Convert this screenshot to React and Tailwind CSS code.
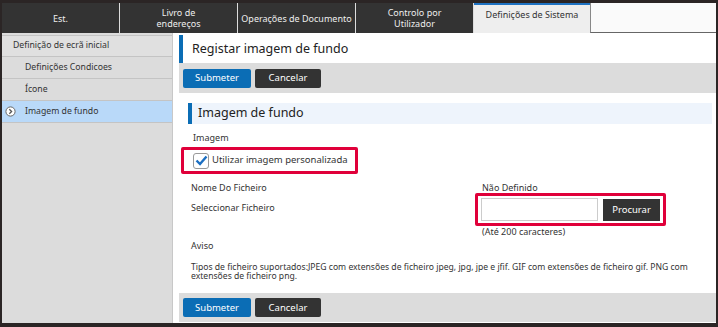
import React from 'react';

const tabs = [
  { label: 'Est.' },
  { label: 'Livro de\nendereços' },
  { label: 'Operações de Documento' },
  { label: 'Controlo por\nUtilizador' },
];

const Buttons = () => (
  <div className="flex gap-[4px]">
    <button className="w-[68px] h-[19px] rounded-[2px] bg-[#0b6db5] text-white text-[9.5px] leading-none">Submeter</button>
    <button className="w-[66px] h-[19px] rounded-[2px] bg-[#333] text-white text-[9.5px] leading-none">Cancelar</button>
  </div>
);

export default function App() {
  return (
    <div
      className="w-[718px] h-[327px] bg-[#2b2525] p-[2px] pt-[3px] pb-[4px] flex flex-col text-[#333]"
      style={{ fontFamily: '"Noto Sans", "Open Sans", sans-serif' }}
    >
      {/* Tab bar */}
      <div className="flex h-[30px] shrink-0">
        {tabs.map((t, i) => (
          <div key={i} className="w-[118px] flex items-stretch">
            <div className="flex-1 bg-[#333] flex items-center justify-center text-center text-[9px] leading-[11px] text-[#eee] whitespace-pre-line">
              {t.label}
            </div>
            <div className="w-[1px] bg-[#ddd]" />
          </div>
        ))}
        <div className="w-[116px] bg-[#eee] border-t-2 border-[#1f73c3] flex justify-center pt-[4px] text-[9px] leading-[11px]">
          Definições de Sistema
        </div>
        <div className="flex-1 bg-[#fafafa] border-b border-[#666] border-l border-l-[#888]" />
      </div>

      <div className="flex flex-1 bg-white min-h-0">
        {/* Sidebar */}
        <div className="w-[171px] bg-[#dcdcdc] border-r border-[#c8c8c8] pt-[2px] text-[8.7px]">
          <div className="h-[22px] flex items-center pl-[11px] border-y border-[#c4c4c4] bg-[#e0e0e0]">Definição de ecrã inicial</div>
          <div className="h-[22px] flex items-center pl-[23px] border-b border-[#c4c4c4]">Definições Condicoes</div>
          <div className="h-[22px] flex items-center pl-[23px] border-b border-[#c4c4c4]">Ícone</div>
          <div className="h-[22px] flex items-center pl-[3px] border-b border-[#c4c4c4] bg-[#b9d9f9]">
            <svg width="11" height="11" viewBox="0 0 11 11" className="mr-[9px]">
              <circle cx="5.5" cy="5.5" r="4.6" fill="#fff" stroke="#666" strokeWidth="1" />
              <path d="M4.3 3.2 L6.6 5.5 L4.3 7.8" fill="none" stroke="#555" strokeWidth="1.3" />
            </svg>
            Imagem de fundo
          </div>
        </div>

        {/* Main */}
        <div className="flex-1 flex flex-col pl-[6px] pt-[2px]">
          <div className="h-[28px] border-l-[4px] border-[#0b6db5] flex items-center pl-[9px] text-[12.5px] text-[#222]">
            Registar imagem de fundo
          </div>
          <div className="h-[30px] bg-[#dcdcdc] flex items-center pl-[4px]">
            <Buttons />
          </div>

          <div className="flex-1 flex flex-col pl-[9px] pr-[4px] pt-[10px]">
            <div className="h-[21px] bg-[#eef4fc] border-l-[4px] border-[#0b6db5] flex items-center pl-[6px] text-[12.5px] text-[#222]">
              Imagem de fundo
            </div>
            <div className="pl-[5px] text-[9px] mt-[8px] leading-[12px]">Imagem</div>
            <div className="mt-[3px] -ml-[7px] w-[177px] h-[27px] border-[3px] border-[#e0003a] rounded-[2px] flex items-center pl-[9px]">
              <div className="w-[16px] h-[16px] rounded-[3px] border border-[#999] bg-white flex items-center justify-center">
                <svg width="13" height="11" viewBox="0 0 13 11">
                  <path d="M1.5 5.5 L5 9 L11.5 1.5" fill="none" stroke="#1c6fc2" strokeWidth="2.4" />
                </svg>
              </div>
              <span className="ml-[3px] text-[9.5px] whitespace-nowrap">Utilizar imagem personalizada</span>
            </div>

            <div className="flex mt-[8px] text-[9px] leading-[12px]">
              <div className="w-[294px] pl-[3px]">Nome Do Ficheiro</div>
              <div>Não Definido</div>
            </div>
            <div className="flex text-[9px] leading-[12px]">
              <div className="w-[287px] pl-[3px] pt-[8px]">Seleccionar Ficheiro</div>
              <div className="-mt-[1px] w-[191px] h-[33px] border-[3px] border-[#e0003a] rounded-[2px] flex items-center pl-[3px] gap-[5px]">
                <div className="w-[117px] h-[23px] border border-[#ccc] bg-white" />
                <button className="w-[57px] h-[22px] bg-[#333] text-white text-[9.5px] leading-none">Procurar</button>
              </div>
            </div>
            <div className="pl-[294px] text-[9px] leading-[12px] mt-0">(Até 200 caracteres)</div>
            <div className="pl-[3px] text-[9px] leading-[12px] mt-[2px]">Aviso</div>
            <div className="pl-[3px] pr-[8px] text-[8.6px] leading-[9px] mt-[11px]">
              Tipos de ficheiro suportados:JPEG com extensões de ficheiro jpeg, jpg, jpe e jfif. GIF com extensões de ficheiro gif. PNG com extensões de ficheiro png.
            </div>
          </div>

          <div className="h-[29px] bg-[#dcdcdc] flex items-center pl-[4px] mb-[1px]">
            <Buttons />
          </div>
        </div>
      </div>
    </div>
  );
}
